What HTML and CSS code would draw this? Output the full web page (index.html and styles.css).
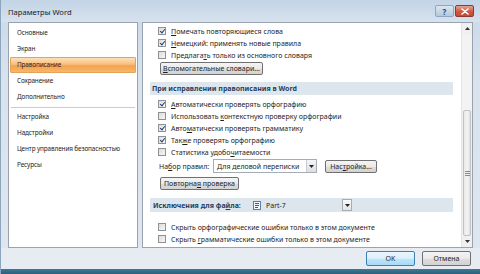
FILE: index.html
```html
<!DOCTYPE html>
<html lang="ru">
<head>
<meta charset="utf-8">
<title>Параметры Word</title>
<link rel="stylesheet" href="styles.css">
</head>
<body>
<div class="window">
  <div class="titlebar">
    <span class="title">Параметры Word</span>
    <div class="caption-btns">
      <span class="cbtn help">?</span>
      <span class="cbtn close"><svg width="8" height="7" viewBox="0 0 8 7"><path d="M1 1 L7 6 M7 1 L1 6" stroke="#fff" stroke-width="1.6" stroke-linecap="round"/></svg></span>
    </div>
  </div>
  <div class="main">
    <div class="nav">
      <div class="nav-item">Основные</div>
      <div class="nav-item">Экран</div>
      <div class="nav-item active">Правописание</div>
      <div class="nav-item">Сохранение</div>
      <div class="nav-item">Дополнительно</div>
      <div class="nav-sep"></div>
      <div class="nav-item">Настройка</div>
      <div class="nav-item">Надстройки</div>
      <div class="nav-item">Центр управления безопасностью</div>
      <div class="nav-item">Ресурсы</div>
    </div>
    <div class="pane">
      <div class="content">
        <div class="row"><span class="cb checked"></span><span><u>П</u>омечать повторяющиеся слова</span></div>
        <div class="row"><span class="cb checked"></span><span><u>Н</u>емецкий: применять новые правила</span></div>
        <div class="row"><span class="cb"></span><span>Предлага<u>т</u>ь только из основного словаря</span></div>
        <div class="btn-row"><span class="btn dict-btn"><span><u>В</u>спомогательные словари...</span></span></div>
        <div class="section">При исправлении правописания в Word</div>
        <div class="row"><span class="cb checked"></span><span><u>А</u>втоматически проверять орфографию</span></div>
        <div class="row"><span class="cb"></span><span>Использовать <u>к</u>онтекстную проверку орфографии</span></div>
        <div class="row"><span class="cb checked"></span><span>Авто<u>м</u>атически проверять грамматику</span></div>
        <div class="row"><span class="cb checked"></span><span>Так<u>ж</u>е проверять орфографию</span></div>
        <div class="row"><span class="cb"></span><span>Статистика удобо<u>ч</u>итаемости</span></div>
        <div class="rules-row">
          <span class="rules-label">На<u>б</u>ор правил:</span>
          <span class="select rules-select"><span class="select-text">Для деловой переписки</span><span class="select-arrow"><svg width="5" height="3" viewBox="0 0 5 3"><path d="M0 0 H5 L2.5 3 Z" fill="#222"/></svg></span></span>
          <span class="btn setup-btn"><span>Нас<u>т</u>ройка...</span></span>
        </div>
        <div class="btn-row recheck"><span class="btn recheck-btn"><span>Повторна<u>я</u> проверка</span></span></div>
        <div class="section section-file">
          <span class="section-label">Исключения для фа<u>й</u>ла:</span>
          <span class="select file-select"><span class="doc-icon"><svg width="9" height="9" viewBox="0 0 9 9"><rect x="0.5" y="0.5" width="7" height="8" fill="#f4f8fc" stroke="#5a7fa8"/><rect x="2" y="2" width="4" height="1" fill="#2f5f9a"/><rect x="2" y="4" width="4" height="1" fill="#2f5f9a"/><rect x="2" y="6" width="3" height="1" fill="#2f5f9a"/></svg></span><span class="select-text">Part-7</span><span class="select-arrow"><svg width="5" height="3" viewBox="0 0 5 3"><path d="M0 0 H5 L2.5 3 Z" fill="#222"/></svg></span></span>
        </div>
        <div class="row"><span class="cb"></span><span>Скрыть орфографические ошибки только в этом документе</span></div>
        <div class="row"><span class="cb"></span><span>Скрыть <u>г</u>рамматические ошибки только в этом документе</span></div>
      </div>
      <div class="scrollbar">
        <div class="sb-arrow"><svg width="5" height="3" viewBox="0 0 5 3"><path d="M0 3 H5 L2.5 0 Z" fill="#333"/></svg></div>
        <div class="sb-track"></div>
        <div class="sb-thumb"><span class="grip"></span></div>
        <div class="sb-arrow"><svg width="5" height="3" viewBox="0 0 5 3"><path d="M0 0 H5 L2.5 3 Z" fill="#333"/></svg></div>
      </div>
    </div>
  </div>
  <div class="footer">
    <span class="btn footer-btn ok"><span>OK</span></span>
    <span class="btn footer-btn"><span>Отмена</span></span>
  </div>
  <div class="bottom-edge"></div>
</div>
</body>
</html>
```
FILE: styles.css
```css
* { box-sizing: border-box; }
html, body {
  margin: 0;
  padding: 0;
  width: 480px;
  height: 274px;
  overflow: hidden;
  background: #cddbe9;
}
body {
  font-family: "Noto Sans", "Open Sans", sans-serif;
  font-size: 7px;
  color: #1e1e1e;
}
u { text-decoration: underline; text-underline-offset: 1px; }

.window {
  width: 480px;
  height: 274px;
  display: flex;
  flex-direction: column;
  background: linear-gradient(#c9d8e8, #d8e3ee 30%, #dfe7f0 100%);
  border-left: 1px solid #8da6bf;
}

.titlebar {
  height: 22px;
  display: flex;
  align-items: center;
  justify-content: space-between;
  padding: 0 6px 0 7px;
  background: linear-gradient(#c2d4e6, #d7e2ed);
}
.title {
  font-size: 7.6px;
  color: #1a1a1a;
  margin-top: 1px;
}
.caption-btns {
  display: flex;
  gap: 1px;
  align-self: flex-start;
  margin-top: 5px;
}
.cbtn {
  height: 12px;
  border-radius: 2px;
  display: flex;
  align-items: center;
  justify-content: center;
}
.help {
  width: 19px;
  background: linear-gradient(#dbe6f1, #b5c8dc);
  border: 1px solid #8ea6bf;
  color: #2c4c70;
  font-size: 8px;
  font-weight: bold;
}
.close {
  width: 19px;
  background: linear-gradient(#e8a493, #cf5a42 55%, #c44a33);
  border: 1px solid #8d3a2c;
}

.main {
  height: 226px;
  display: flex;
  gap: 4px;
  padding: 0 7px;
}

.nav {
  width: 130px;
  background: #fff;
  border: 1px solid #9aa3ad;
  padding-top: 2px;
  font-size: 6.4px;
  letter-spacing: -0.12px;
  overflow: hidden;
}
.nav-item {
  height: 16px;
  line-height: 16px;
  padding-left: 7px;
  margin: 0 1px;
  white-space: nowrap;
  color: #1e1e1e;
}
.nav-item.active {
  background: linear-gradient(#fde0b8, #f9bf7f 45%, #f4a24f 55%, #f8b66a);
  border: 1px solid #e3a45a;
  line-height: 14px;
  padding-left: 6px;
  border-radius: 1px;
}
.nav-sep {
  height: 3px;
  border-bottom: 1px solid #c6ccd3;
  margin: 0 2px 1px 2px;
}

.pane {
  flex: 1;
  display: flex;
  background: #fff;
  border: 1px solid #9aa3ad;
}
.content {
  flex: 1;
  padding: 2px 8px 0 7px;
  overflow: hidden;
}
.row {
  height: 12px;
  display: flex;
  align-items: center;
  gap: 5px;
  padding-left: 8px;
  white-space: nowrap;
}
.cb {
  width: 8px;
  height: 8px;
  flex: none;
  border: 1px solid #8f9295;
  background: linear-gradient(135deg, #dcdcdc, #f7f7f7);
  position: relative;
}
.cb.checked::after {
  content: "";
  position: absolute;
  left: 2px;
  top: 0px;
  width: 2px;
  height: 4px;
  border-right: 1.2px solid #26406b;
  border-bottom: 1.2px solid #26406b;
  transform: rotate(40deg);
}

.btn {
  display: inline-flex;
  align-items: center;
  justify-content: center;
  height: 13px;
  padding: 0 4px;
  border: 1px solid #707070;
  border-radius: 2px;
  background: linear-gradient(#f4f4f4, #e9e9e9 50%, #dcdcdc 51%, #d3d3d3);
  white-space: nowrap;
  color: #1e1e1e;
}
.btn-row {
  padding-left: 10px;
  margin-top: 0px;
  height: 14px;
  display: flex;
  align-items: center;
}
.dict-btn { width: 103px; }

.section {
  margin-top: 7px;
  margin-bottom: 3px;
  height: 13px;
  line-height: 13px;
  padding-left: 2px;
  background: #dde6ec;
  font-weight: bold;
  color: #253e5e;
  white-space: nowrap;
}

.rules-row {
  height: 14px;
  display: flex;
  align-items: center;
  padding-left: 9px;
  white-space: nowrap;
  margin-top: 1px;
}
.rules-label { width: 54px; }
.select {
  display: flex;
  align-items: center;
  height: 14px;
  border: 1px solid #a5acb5;
  background: #fff;
  font-weight: normal;
  color: #1e1e1e;
}
.select-text {
  flex: 1;
  padding-left: 3px;
}
.select-arrow {
  width: 10px;
  height: 12px;
  display: flex;
  align-items: center;
  justify-content: center;
  border-left: 1px solid #c8ccd1;
  background: linear-gradient(#f5f5f5, #dedede);
}
.rules-select { width: 104px; }
.setup-btn { margin-left: 8px; width: 52px; }

.recheck { margin-top: 3px; }
.recheck-btn { width: 79px; }

.section-file {
  display: flex;
  align-items: center;
  margin-top: 8px;
  margin-bottom: 9px;
  height: 14px;
}
.section-label { width: 98px; padding-left: 1px; }
.file-select {
  width: 103px;
  border-color: transparent;
  background: transparent;
}
.file-select .select-text { padding-left: 4px; }
.file-select .select-arrow { border: 1px solid #a5acb5; background: linear-gradient(#fafafa, #e4e4e4); }
.doc-icon { display: flex; padding-left: 2px; }

.scrollbar {
  width: 11px;
  display: flex;
  flex-direction: column;
  background: #f0f0f0;
  border-left: 1px solid #e4e4e4;
}
.sb-arrow {
  height: 11px;
  display: flex;
  align-items: center;
  justify-content: center;
}
.sb-track { height: 76px; background: #f3f3f3; }
.sb-thumb {
  flex: 1;
  margin: 0 1px;
  border: 1px solid #bfc3c7;
  border-radius: 2px;
  background: linear-gradient(90deg, #e9e9e9, #f4f4f4 50%, #e2e2e2);
  display: flex;
  align-items: center;
  justify-content: center;
}
.grip {
  width: 5px;
  height: 5px;
  background: repeating-linear-gradient(#8a8a8a 0 1px, transparent 1px 2px);
}

.footer {
  height: 21px;
  display: flex;
  align-items: center;
  justify-content: flex-end;
  gap: 7px;
  padding-right: 9px;
  background: #e6ecf2;
}
.footer-btn { width: 49px; height: 15px; }
.ok {
  border-color: #3c7fb1;
  background: linear-gradient(#eaf6fd, #d9f0fc 50%, #bee6fd 51%, #a7d9f5);
}
.bottom-edge {
  flex: 1;
  background: linear-gradient(#3d7a98, #2b5f7c);
}
```
